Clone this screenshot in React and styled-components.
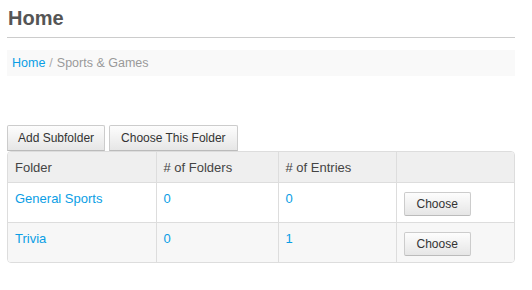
import React from "react";
import styled, { createGlobalStyle } from "styled-components";

const GlobalStyle = createGlobalStyle`
  body {
    margin: 0;
    background: #fff;
    font-family: "Liberation Sans", Arial, sans-serif;
    color: #333;
  }
`;

const folders = [
  { name: "General Sports", folders: 0, entries: 0 },
  { name: "Trivia", folders: 0, entries: 1 },
];

const App = () => {
  return (
    <>
      <GlobalStyle />
      <Page>
        <Title>Home</Title>
        <Breadcrumb>
          <Link href="#">Home</Link>
          <Divider>/</Divider>
          <Current>Sports &amp; Games</Current>
        </Breadcrumb>
        <Toolbar>
          <Button>Add Subfolder</Button>
          <Button $wide>Choose This Folder</Button>
        </Toolbar>
        <TableWrap>
          <Table>
            <colgroup>
              <col style={{ width: 148 }} />
              <col style={{ width: 122 }} />
              <col style={{ width: 118 }} />
              <col />
            </colgroup>
            <thead>
              <tr>
                <Th>Folder</Th>
                <Th># of Folders</Th>
                <Th># of Entries</Th>
                <Th />
              </tr>
            </thead>
            <tbody>
              {folders.map((f, i) => (
                <Row key={f.name} $striped={i % 2 === 1}>
                  <Td>
                    <Link href="#">{f.name}</Link>
                  </Td>
                  <Td>
                    <Link href="#">{f.folders}</Link>
                  </Td>
                  <Td>
                    <Link href="#">{f.entries}</Link>
                  </Td>
                  <ActionTd>
                    <SmallButton>Choose</SmallButton>
                  </ActionTd>
                </Row>
              ))}
            </tbody>
          </Table>
        </TableWrap>
      </Page>
    </>
  );
};

export default App;

const Page = styled.div`
  width: 508px;
  padding: 0 0 0 7px;
`;

const Title = styled.h1`
  margin: 0;
  padding: 7px 0 8px 1px;
  font-size: 20px;
  line-height: 22px;
  font-weight: bold;
  color: #555;
  border-bottom: 1px solid #ccc;
`;

const Breadcrumb = styled.div`
  margin-top: 12px;
  height: 26px;
  padding: 0 5px;
  display: flex;
  align-items: center;
  background: #f9f9f9;
  font-size: 12.5px;
  color: #999;
`;

const Link = styled.a`
  color: #0a9ee5;
  text-decoration: none;
`;

const Divider = styled.span`
  color: #aaa;
  padding: 0 4px;
`;

const Current = styled.span`
  color: #999;
`;

const Toolbar = styled.div`
  display: flex;
  gap: 4px;
  margin-top: 49px;
`;

const Button = styled.button`
  height: 26px;
  padding: 0 ${(p) => (p.$wide ? "11px" : "10px")};
  font-family: "Liberation Sans", Arial, sans-serif;
  font-size: 12px;
  color: #333;
  background: linear-gradient(#fdfdfd, #e6e6e6);
  border: 1px solid #ccc;
  border-bottom-color: #bbb;
  border-radius: 2px 2px 0 0;
`;

const SmallButton = styled(Button)`
  height: 24px;
  padding: 0 12px;
  border-radius: 2px;
`;

const TableWrap = styled.div`
  border: 1px solid #ddd;
  border-radius: 4px;
  overflow: hidden;
`;

const Table = styled.table`
  width: 100%;
  border-collapse: collapse;
  table-layout: fixed;
  font-size: 13px;
`;

const Th = styled.th`
  height: 30px;
  padding: 0 7px;
  text-align: left;
  font-weight: normal;
  color: #444;
  background: #efefef;
  border-left: 1px solid #ddd;
  border-bottom: 1px solid #ddd;
  &:first-child {
    border-left: none;
  }
`;

const Row = styled.tr`
  background: ${(p) => (p.$striped ? "#f7f7f7" : "#fff")};
`;

const Td = styled.td`
  height: 31px;
  padding: 8px 7px 0;
  vertical-align: top;
  border-top: 1px solid #ddd;
  border-left: 1px solid #ddd;
  &:first-child {
    border-left: none;
  }
`;

const ActionTd = styled(Td)`
  padding: 3px 7px 0;
  vertical-align: middle;
`;
